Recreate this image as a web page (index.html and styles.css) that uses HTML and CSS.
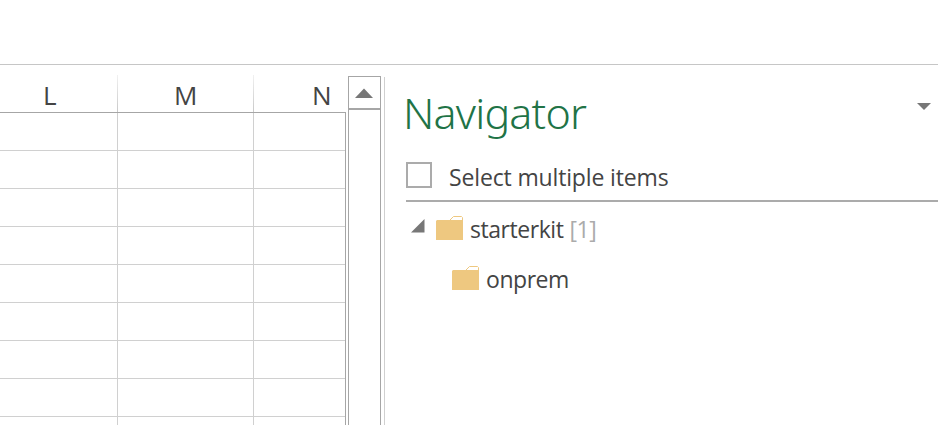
FILE: index.html
```html
<!DOCTYPE html>
<html lang="en">
<head>
<meta charset="utf-8">
<title>Navigator</title>
<link rel="stylesheet" href="styles.css">
</head>
<body>
<div class="ribbon"></div>
<main class="workspace">
  <section class="sheet">
    <div class="headers"><div class="head col-l"><span>L</span></div><div class="head col-m"><span>M</span></div><div class="head col-n"><span>N</span></div></div>
    <div class="grid">
      <div class="row"><i></i><i></i><i></i></div>
      <div class="row"><i></i><i></i><i></i></div>
      <div class="row"><i></i><i></i><i></i></div>
      <div class="row"><i></i><i></i><i></i></div>
      <div class="row"><i></i><i></i><i></i></div>
      <div class="row"><i></i><i></i><i></i></div>
      <div class="row"><i></i><i></i><i></i></div>
      <div class="row"><i></i><i></i><i></i></div>
      <div class="row"><i></i><i></i><i></i></div>
    </div>
  </section>
  <div class="scrollbar">
    <div class="scroll-up"><svg width="18" height="10" viewBox="0 0 18 10"><path d="M0 10L9 0.5L18 10Z" fill="#777"/></svg></div>
  </div>
  <aside class="pane">
    <header class="title"><h1>Navigator</h1><svg class="menu" width="14" height="7" viewBox="0 0 14 7"><path d="M0 0H14L7 7Z" fill="#777"/></svg></header>
    <label class="multi"><span class="box"></span><span class="label">Select multiple items</span></label>
    <div class="item root">
      <svg class="expander" width="14" height="14" viewBox="0 0 14 14"><path d="M0 13.5L13.5 0V13.5Z" fill="#777"/></svg>
      <svg class="folder" width="27" height="24" viewBox="0 0 27 24"><path d="M0 5L1 4H27V24H0Z" fill="#eec880"/><path d="M14 4L17.5 .5H25.5L26.5 1.5V4" fill="#fff" stroke="#eec880"/></svg>
      <span class="name">starterkit</span><span class="count">[1]</span>
    </div>
    <div class="item child">
      <svg class="folder" width="27" height="24" viewBox="0 0 27 24"><path d="M0 5L1 4H27V24H0Z" fill="#eec880"/><path d="M14 4L17.5 .5H25.5L26.5 1.5V4" fill="#fff" stroke="#eec880"/></svg>
      <span class="name">onprem</span>
    </div>
  </aside>
</main>
</body>
</html>
```
FILE: styles.css
```css
* { box-sizing: border-box; }
body { margin: 0; height: 425px; overflow: hidden; background: #fff; color: #444; font-family: "Open Sans", "Noto Sans", sans-serif; }
.ribbon { height: 65px; border-bottom: 1px solid #c6c6c6; }
.workspace { display: flex; height: 360px; }
.sheet { width: 346px; padding-top: 10px; overflow: hidden; }
.headers { display: flex; height: 37px; font-size: 26px; line-height: 40px; }
.head { border-right: 1px solid; border-image: linear-gradient(#f2f2f2, #c8c8c8) 1; }
.head span { display: block; }
.col-l { width: 118px; padding-left: 43px; }
.col-m { width: 136px; padding-left: 56px; }
.col-n { width: 92px; padding-left: 58px; border: 0; }
.grid { border-top: 1px solid #a6a6a6; border-right: 1px solid #a6a6a6; }
.row { display: grid; grid-template-columns: 118px 136px 1fr; height: 38px; border-bottom: 1px solid #d0d0d0; }
.row i { border-right: 1px solid #d0d0d0; }
.row i:last-child { border: 0; }
.scrollbar { width: 33px; margin: 11px 0 0 2px; border: 1px solid #a6a6a6; border-bottom: 0; }
.scroll-up { display: flex; justify-content: center; height: 33px; padding-top: 11px; padding-right: 1px; border-bottom: 2px solid #a6a6a6; }
.pane { flex: 1; margin: 12px 0 0 3px; padding-left: 21px; border-left: 1px solid #d0d0d0; }
.title { display: flex; justify-content: space-between; height: 85px; margin-left: -3px; padding-right: 7px; }
h1 { margin: 0; color: #217346; font-family: "Noto Sans", "Open Sans", sans-serif; font-size: 43px; font-weight: 300; line-height: 72px; letter-spacing: -0.8px; }
.menu { margin-top: 26px; }
.multi { display: flex; height: 40px; border-bottom: 2px solid #ababab; font-size: 23px; line-height: 30px; }
.label { letter-spacing: -0.15px; }
.box { width: 26px; height: 26px; margin-right: 17px; border: 2px solid #ababab; }
.item { display: flex; height: 50px; padding-top: 14px; font-size: 23px; line-height: 26px; letter-spacing: -0.45px; }
.root { padding-left: 5px; }
.child { padding-left: 46px; }
.expander { margin: 3px 11px 0 0; }
.folder { margin-right: 7px; }
.count { margin-left: 6px; color: #ababab; }
```
